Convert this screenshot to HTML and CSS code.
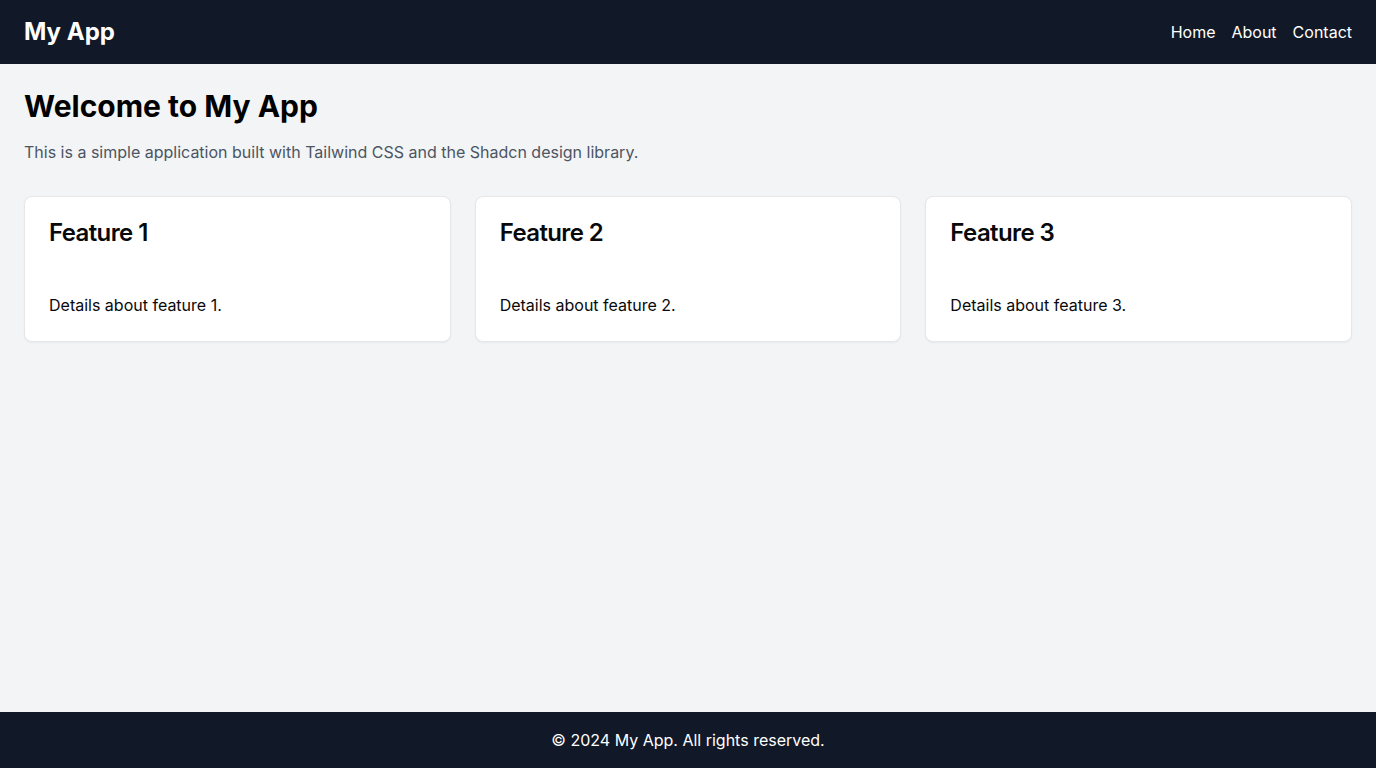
FILE: index.html
```html
<!DOCTYPE html>
<html lang="en">
<head>
<meta charset="utf-8">
<title>My App</title>
<link rel="stylesheet" href="styles.css">
</head>
<body>
<div class="page">
  <header class="topbar">
    <div class="brand">My App</div>
    <nav class="nav">
      <a href="#">Home</a>
      <a href="#">About</a>
      <a href="#">Contact</a>
    </nav>
  </header>
  <main class="main">
    <h1 class="title">Welcome to My App</h1>
    <p class="lead">This is a simple application built with Tailwind CSS and the Shadcn design library.</p>
    <div class="grid">
      <div class="card">
        <div class="card-header"><h3 class="card-title">Feature 1</h3></div>
        <div class="card-content"><p>Details about feature 1.</p></div>
      </div>
      <div class="card">
        <div class="card-header"><h3 class="card-title">Feature 2</h3></div>
        <div class="card-content"><p>Details about feature 2.</p></div>
      </div>
      <div class="card">
        <div class="card-header"><h3 class="card-title">Feature 3</h3></div>
        <div class="card-content"><p>Details about feature 3.</p></div>
      </div>
    </div>
  </main>
  <footer class="footer">© 2024 My App. All rights reserved.</footer>
</div>
</body>
</html>
```
FILE: styles.css
```css
* { box-sizing: border-box; }
html, body { margin: 0; padding: 0; }
body {
  font-family: Inter, "Noto Sans", sans-serif;
  font-size: 16px;
  line-height: 24px;
  color: #09090b;
  background: #f3f4f6;
}
.page {
  min-height: 100vh;
  display: flex;
  flex-direction: column;
}
.topbar {
  height: 64px;
  background: #111827;
  color: #fff;
  display: flex;
  align-items: center;
  justify-content: space-between;
  padding: 0 24px;
}
.brand {
  font-size: 24px;
  line-height: 32px;
  font-weight: 700;
}
.nav {
  display: flex;
  gap: 16px;
}
.nav a {
  color: #fff;
  text-decoration: none;
  font-size: 16px;
}
.main {
  flex: 1;
  padding: 24px;
}
.title {
  margin: 0 0 16px;
  font-size: 30px;
  line-height: 36px;
  font-weight: 700;
  color: #000;
}
.lead {
  margin: 0 0 32px;
  color: #4b5563;
}
.grid {
  display: grid;
  grid-template-columns: repeat(3, 1fr);
  gap: 24px;
}
.card {
  background: #fff;
  border: 1px solid #e5e7eb;
  border-radius: 8px;
  box-shadow: 0 1px 2px rgba(0,0,0,0.05);
}
.card-header {
  padding: 24px;
}
.card-title {
  margin: 0;
  font-size: 24px;
  line-height: 24px;
  font-weight: 600;
  letter-spacing: -0.025em;
}
.card-content {
  padding: 24px;
}
.card-content p { margin: 0; }
.footer {
  height: 56px;
  background: #111827;
  color: #fff;
  display: flex;
  align-items: center;
  justify-content: center;
}
```
